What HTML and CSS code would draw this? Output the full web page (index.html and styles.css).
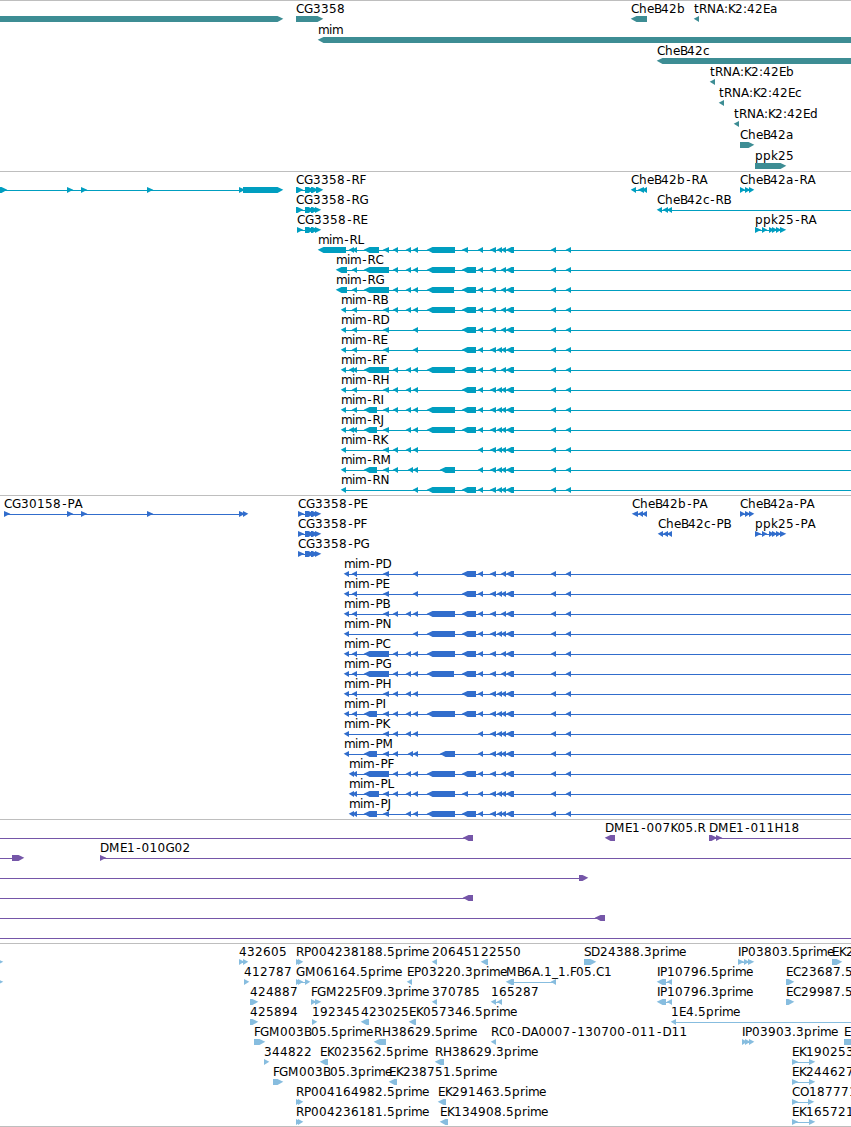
FILE: index.html
```html
<!DOCTYPE html>
<html lang="en">
<head>
<meta charset="UTF-8">
<meta name="viewport" content="width=device-width, initial-scale=1.0">
<title>Genome Browser</title>
<link rel="stylesheet" href="styles.css">
</head>
<body>

<div class="browser">
  <div class="track genes"><svg id="genes" width="851" height="170"></svg></div>
  <div class="track transcripts"><svg id="transcripts" width="851" height="323"></svg></div>
  <div class="track proteins"><svg id="proteins" width="851" height="323"></svg></div>
  <div class="track clones"><svg id="clones" width="851" height="123"></svg></div>
  <div class="track ests"><svg id="ests" width="851" height="182"></svg></div>
  <div class="track end"></div>
</div>

<script src="tracks.js"></script>
</body>
</html>
```
FILE: styles.css
```css
body {
  margin: 0;
  background: #fff;
  overflow: hidden;
}

.browser { width: 851px; }
.track { border-top: 1px solid #bebebe; }
.track svg { display: block; overflow: hidden; }

.track text {
  font-family: "DejaVu Sans", sans-serif;
  font-size: 12px;
  fill: #000;
  white-space: pre;
}

.genes { color: #3d8d94; }
.transcripts { color: #009ec0; }
.proteins { color: #316dcc; }
.clones { color: #7556a8; }
.ests { color: #87bddf; }

.feature { fill: currentColor; }
.intron { fill: currentColor; shape-rendering: crispEdges; }
```
FILE: tracks.js
```javascript
const NS = 'http://www.w3.org/2000/svg';
const EDGE = 860;   // past the right side of the view

// label glyph advances, anything not listed is 8px
const ADVANCE = {
  B: 7, D: 9, E: 7, F: 6, G: 9, H: 9, I: 3, J: 4, K: 7, L: 6, M: 11, N: 9, O: 9, P: 7, S: 7,
  a: 7, c: 6, e: 7, i: 3, k: 7, m: 11, r: 5, t: 5, ':': 4, '.': 4, '_': 6, '-': 6.6
};

// exons shared by the mim transcripts
const EXONS = {
  v: [349, 354], w: [352, 357], x: [352, 357],
  P: [364, 377], Q: [364, 379], R: [364, 389],
  a: [383, 389], b: [393, 398], c: [406, 411], n: [408, 413], d: [413, 418],
  E: [427, 455], G: [427, 454], S: [440, 455],
  F: [462, 476], f: [462, 468], g: [478, 483], h: [490, 496],
  i: [497, 502], j: [501, 506], k: [506, 514], l: [551, 556], m: [566, 571]
};

function mim(row, name, first, keys) {
  const exons = [...keys + 'lm'].map(k => EXONS[k]);
  if (first) exons.unshift(first);
  return [row, name, '<', exons, [exons[0][0] + 3, EDGE]];
}

// [row, label, strand, exons, intron line]
const genes = [
  [0, '', '>', [[-20, 283]]],
  [0, 'CG3358', '>', [[296, 323]]],
  [0, 'CheB42b', '<', [[631, 647]]],
  [0, 'tRNA:K2:42Ea', '<', [[694, 699]]],
  [1, 'mim', '<', [[318, EDGE]]],
  [2, 'CheB42c', '<', [[657, EDGE]]],
  [3, 'tRNA:K2:42Eb', '<', [[710, 715]]],
  [4, 'tRNA:K2:42Ec', '<', [[719, 724]]],
  [5, 'tRNA:K2:42Ed', '<', [[734, 739]]],
  [6, 'CheB42a', '>', [[740, 754]]],
  [7, 'ppk25', '>', [[755, 786]]]
];

const transcripts = [
  [0, '', '>', [[-9, 7], [67, 73], [81, 87], [147, 153], [239, 245], [243, 283]]],
  [0, 'CG3358-RF', '>', [[296, 303], [305, 314], [311, 318], [316, 323]]],
  [1, 'CG3358-RG', '>', [[296, 303], [305, 314], [311, 318], [315, 321]]],
  [2, 'CG3358-RE', '>', [[297, 303], [305, 314], [311, 318], [315, 321]]],
  [0, 'CheB42b-RA', '<', [[631, 636], [638, 644], [642, 647]]],
  [1, 'CheB42c-RB', '<', [[657, 662], [663, 668], [667, 672]], [659, EDGE]],
  [0, 'CheB42a-RA', '>', [[740, 745], [745, 750], [749, 754]]],
  [2, 'ppk25-RA', '>', [[755, 761], [762, 767], [769, 774], [772, 777], [776, 781], [780, 786]]],
  mim(3, 'mim-RL', [318, 346], 'vwQabcdEfghijk'),
  mim(4, 'mim-RC', [336, 347], 'xRbcdEFghjk'),
  mim(5, 'mim-RG', [336, 347], 'xRbcdGFghjk'),
  mim(6, 'mim-RB', [341, 346], 'xabcdEFghjk'),
  mim(7, 'mim-RD', [341, 346], 'xadFghjk'),
  mim(8, 'mim-RE', [341, 346], 'xadFghijk'),
  mim(9, 'mim-RF', [341, 346], 'vwRbcdEFghjk'),
  mim(10, 'mim-RH', [341, 346], 'xabcdFghijk'),
  mim(11, 'mim-RI', [341, 346], 'xPabcdEFghijk'),
  mim(12, 'mim-RJ', [341, 346], 'vwPacdEFghijk'),
  mim(13, 'mim-RK', [341, 346], 'abcdghijk'),
  mim(14, 'mim-RM', [341, 346], 'PabndSghijk'),
  mim(15, 'mim-RN', [341, 346], 'dEFghijk')
];

const proteins = [
  [0, 'CG30158-PA', '>', [[4, 10], [67, 73], [81, 87], [147, 153], [239, 245], [243, 248]]],
  [0, 'CG3358-PE', '>', [[298, 304], [305, 314], [311, 318], [315, 321]]],
  [1, 'CG3358-PF', '>', [[298, 304], [305, 314], [311, 318], [315, 321]]],
  [2, 'CG3358-PG', '>', [[298, 304], [305, 314], [311, 318], [315, 321]]],
  [0, 'CheB42b-PA', '<', [[632, 638], [638, 643], [642, 647]]],
  [1, 'CheB42c-PB', '<', [[658, 663], [663, 668], [667, 672]]],
  [0, 'CheB42a-PA', '>', [[740, 745], [745, 750], [749, 754]]],
  [1, 'ppk25-PA', '>', [[755, 761], [762, 767], [769, 774], [772, 777], [776, 781], [780, 786]]],
  mim(3, 'mim-PD', [344, 349], 'xadFghjk'),
  mim(4, 'mim-PE', [344, 349], 'xadFghijk'),
  mim(5, 'mim-PB', [344, 349], 'xabcdEFghjk'),
  mim(6, 'mim-PN', [344, 349], 'dEFghijk'),
  mim(7, 'mim-PC', [344, 349], 'xRbcdEFghjk'),
  mim(8, 'mim-PG', [344, 349], 'xRbcdGFghjk'),
  mim(9, 'mim-PH', [344, 349], 'xabcdFghijk'),
  mim(10, 'mim-PI', [344, 349], 'xPabcdEFghijk'),
  mim(11, 'mim-PK', [344, 349], 'abcdghijk'),
  mim(12, 'mim-PM', [344, 349], 'PabndSghijk'),
  mim(13, 'mim-PF', null, 'vwRbcdEFghjk'),
  mim(14, 'mim-PL', null, 'vwQabcdEfghijk'),
  mim(15, 'mim-PJ', null, 'vwPacdEFghijk')
];

const clones = [
  [0, '', '<', [[463, 473]], [-9, 470]],
  [0, 'DME1-007K05.R', '<', [[605, 615]]],
  [0, 'DME1-011H18', '>', [[709, 717], [716, 722]], [712, EDGE]],
  [1, '', '>', [[12, 24]], [-9, 20]],
  [1, 'DME1-010G02', '>', [[100, 106]], [102, EDGE]],
  [2, '', '>', [[579, 588]], [-9, 584]],
  [3, '', '<', [[463, 473]], [-9, 470]],
  [4, '', '<', [[595, 605]], [-9, 600]],
  [5, '', '>', [], [-9, EDGE]]
];

const ests = [
  [0, '', '>', [[-3, 3]]],
  [0, '432605', '>', [[239, 244], [243, 248]]],
  [0, 'RP004238188.5prime', '>', [[296, 301], [298, 303]]],
  [0, '206451', '<', [[432, 437]]],
  [0, '22550', '<', [[481, 488]]],
  [0, 'SD24388.3prime', '>', [[584, 596]]],
  [0, 'IP03803.5prime', '>', [[738, 744], [744, 749], [748, 754]]],
  [0, 'EK2', '>', [[832, 842]]],
  [1, '', '>', [[-3, 3]]],
  [1, '412787', '>', [[244, 249]]],
  [1, 'GM06164.5prime', '>', [[296, 301], [298, 303], [305, 310]]],
  [1, 'EP03220.3prime', '<', [[407, 412]]],
  [1, 'MB6A.1_1.F05.C1', '<', [[506, 514], [551, 556]]],
  [1, 'IP10796.5prime', '<', [[657, 666], [667, 672]]],
  [1, 'EC23687.5', '>', [[786, 794]]],
  [2, '424887', '>', [[250, 258]]],
  [2, 'FGM225F09.3prime', '>', [[311, 316], [315, 321]]],
  [2, '370785', '<', [[432, 437]]],
  [2, '165287', '<', [[491, 496], [497, 502]]],
  [2, 'IP10796.3prime', '<', [[657, 666], [667, 672]]],
  [2, 'EC29987.5', '>', [[786, 794]]],
  [3, '425894', '>', [[250, 258]]],
  [3, '192345', '>', [[312, 317]]],
  [3, '423025', '<', [[361, 369]]],
  [3, 'EK057346.5prime', '<', [[409, 416]]],
  [3, '1E4.5prime', '<', [[671, 676]], [673, EDGE]],
  [4, 'FGM003B05.5prime', '>', [[254, 265]]],
  [4, 'RH38629.5prime', '<', [[374, 386]]],
  [4, 'RC0-DA0007-130700-011-D11', '<', [[491, 496]]],
  [4, 'IP03903.3prime', '>', [[742, 747], [745, 750], [749, 754]]],
  [4, 'E', '>', [[844, EDGE]]],
  [5, '344822', '>', [[264, 269]]],
  [5, 'EK023562.5prime', '<', [[320, 328]]],
  [5, 'RH38629.3prime', '<', [[435, 444]]],
  [5, 'EK190253', '>', [[792, 798], [809, 815]]],
  [6, 'FGM003B05.3prime', '>', [[273, 283]]],
  [6, 'EK238751.5prime', '<', [[389, 397]]],
  [6, 'EK244627', '>', [[792, 798], [809, 815]]],
  [7, 'RP004164982.5prime', '>', [[296, 301], [298, 303]]],
  [7, 'EK291463.5prime', '<', [[438, 446]]],
  [7, 'CO187771', '>', [[792, 798], [808, 814]]],
  [8, 'RP004236181.5prime', '>', [[296, 301], [298, 303]]],
  [8, 'EK134908.5prime', '<', [[440, 448]]],
  [8, 'EK165721', '>', [[792, 798], [809, 815]]]
];

function add(svg, tag, attrs) {
  const el = document.createElementNS(NS, tag);
  for (const key in attrs) el.setAttribute(key, attrs[key]);
  svg.appendChild(el);
  return el;
}

function drawExon(svg, start, end, top, strand) {
  // short exons are nothing but arrowhead
  const head = end - start > 6 ? 5.5 : end - start;
  const mid = top + 2.8;
  const bottom = top + 6;
  const points = strand === '>'
    ? [[start, top], [end - head, top], [end + 0.3, mid], [end - head, bottom], [start, bottom]]
    : [[end, top], [start + head, top], [start - 0.3, mid], [start + head, bottom], [end, bottom]];
  add(svg, 'polygon', { class: 'feature', points: points.map(p => p.join(',')).join(' ') });
}

function drawLabel(svg, text, x, y) {
  const xs = [];
  for (const ch of text) {
    // centre hyphens in their cell
    xs.push(ch === '-' ? x + 1.2 : x);
    x += ADVANCE[ch] || 8;
  }
  add(svg, 'text', { x: xs.join(' '), y: y }).textContent = text;
}

function drawTrack(id, features, rowHeight) {
  const svg = document.getElementById(id);
  for (const [row, label, strand, exons, line] of features) {
    const top = 15 + row * rowHeight;
    const span = line || [exons[0][0] + 2, exons[exons.length - 1][1] - 2];
    if (line || exons.length > 1) {
      add(svg, 'rect', { class: 'intron', x: span[0], y: top + 3, width: span[1] - span[0], height: 1 });
    }
    for (const [start, end] of exons) drawExon(svg, start, end, top, strand);
    if (label) drawLabel(svg, label, exons[0][0], top - 3);
  }
}

drawTrack('genes', genes, 21);
drawTrack('transcripts', transcripts, 20);
drawTrack('proteins', proteins, 20);
drawTrack('clones', clones, 20);
drawTrack('ests', ests, 20);
```
